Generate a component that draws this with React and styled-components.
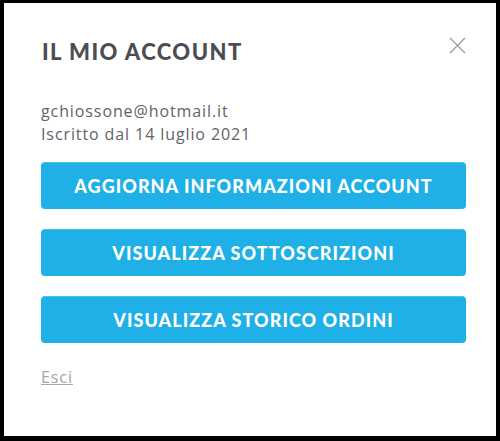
import React from "react";
import styled, { createGlobalStyle } from "styled-components";

const Global = createGlobalStyle`
  html, body { margin: 0; padding: 0; background: #000; }
  body { width: 500px; height: 441px; overflow: hidden; }
`;

const Frame = styled.div`
  box-sizing: border-box;
  width: 500px;
  height: 441px;
  background: #000;
  padding: 3px 4px 5px 4px;
`;

const Modal = styled.div`
  position: relative;
  box-sizing: border-box;
  height: 100%;
  background: #fff;
  padding: 36px 26px 0 37px;
  display: flex;
  flex-direction: column;
`;

const Title = styled.h2`
  margin: 0 0 0 1px;
  font-family: Lato, "Liberation Sans", sans-serif;
  font-weight: 900;
  font-size: 22px;
  line-height: 26px;
  color: #4a4e54;
  letter-spacing: 1.45px;
`;

const Close = styled.button`
  position: absolute;
  top: 31px;
  right: 28px;
  width: 22px;
  height: 22px;
  padding: 0;
  border: 0;
  background: transparent;
  cursor: pointer;
  display: flex;
  align-items: center;
  justify-content: center;
`;

const Info = styled.div`
  margin-top: 35px;
  font-family: "Open Sans", "DejaVu Sans", sans-serif;
  font-size: 16px;
  line-height: 23px;
  letter-spacing: 0.9px;
  color: #5f6368;
`;

const Actions = styled.div`
  margin-top: 16px;
  display: flex;
  flex-direction: column;
  gap: 20px;
  padding-right: 4px;
`;

const ActionButton = styled.button`
  box-sizing: border-box;
  height: 47px;
  width: 100%;
  border: 0;
  border-top: 1px solid #4cc3ee;
  border-radius: 4px;
  background: #1eb0e6;
  color: #fff;
  font-family: Lato, "Liberation Sans", sans-serif;
  font-weight: 900;
  font-size: 18px;
  letter-spacing: 1.05px;
  text-transform: uppercase;
  cursor: pointer;
  display: flex;
  align-items: center;
  justify-content: center;
`;

const Logout = styled.a`
  margin-top: 24px;
  align-self: flex-start;
  font-family: "Open Sans", "DejaVu Sans", sans-serif;
  font-size: 16px;
  line-height: 20px;
  letter-spacing: 0.9px;
  color: #a3a5a8;
  text-decoration: underline;
  cursor: pointer;
`;

export default function App() {
  return (
    <>
      <Global />
      <Frame>
        <Modal>
          <Title>IL MIO ACCOUNT</Title>
          <Close aria-label="Chiudi">
            <svg width="17" height="17" viewBox="0 0 17 17">
              <path d="M1 1 L16 16 M16 1 L1 16" stroke="#9a9a9a" strokeWidth="1.3" fill="none" />
            </svg>
          </Close>
          <Info>
            <div>gchiossone@hotmail.it</div>
            <div>Iscritto dal 14 luglio 2021</div>
          </Info>
          <Actions>
            <ActionButton>Aggiorna informazioni account</ActionButton>
            <ActionButton>Visualizza sottoscrizioni</ActionButton>
            <ActionButton>Visualizza storico ordini</ActionButton>
          </Actions>
          <Logout>Esci</Logout>
        </Modal>
      </Frame>
    </>
  );
}
